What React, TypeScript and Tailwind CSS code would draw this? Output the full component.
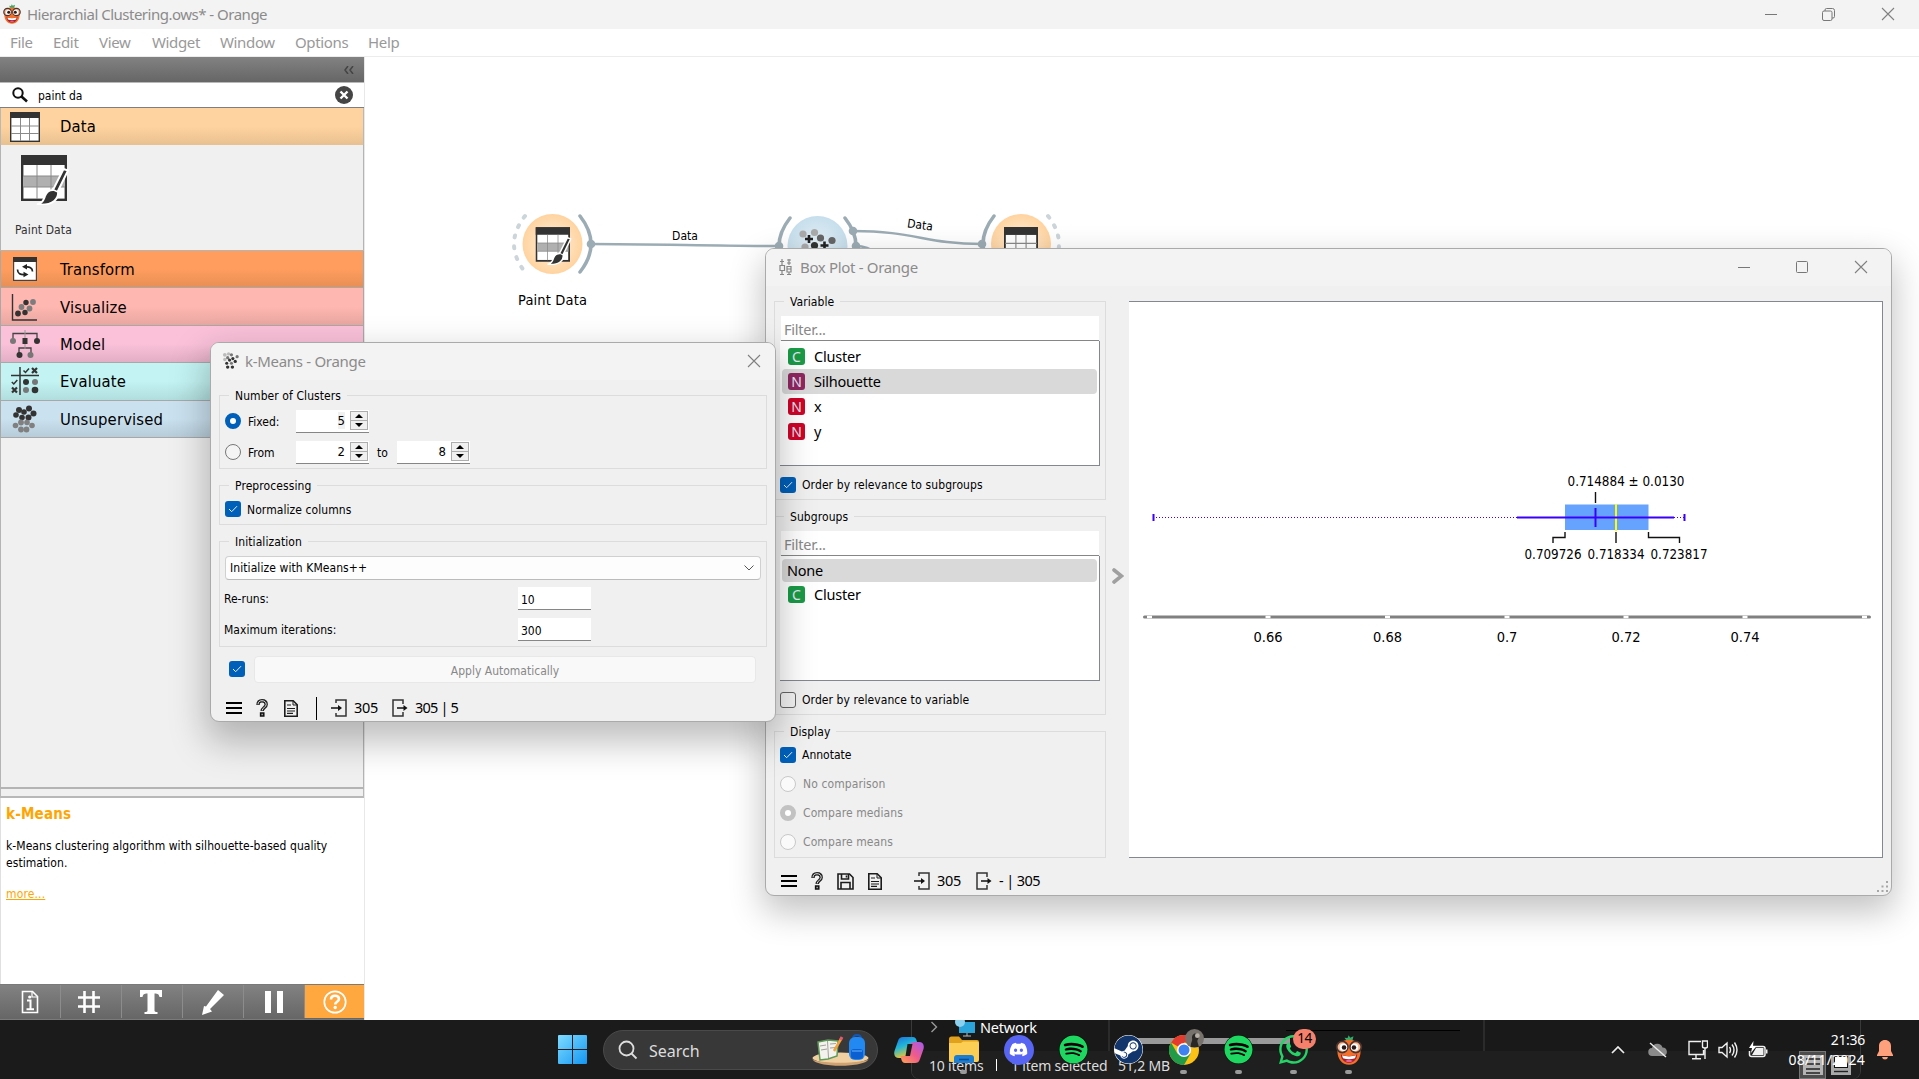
import React from "react";
import { FaDiscord, FaSpotify, FaSteam, FaWhatsapp } from "react-icons/fa";

const ui = "font-['Noto_Sans','Open_Sans',sans-serif]";
const tahoma = "font-['DejaVu_Sans_Condensed','DejaVu_Sans','Noto_Sans',sans-serif] [font-stretch:condensed]";

/* ---------- icons ---------- */

function OrangeLogo({ className = "" }: { className?: string }) {
  return (
    <svg viewBox="0 0 20 20" className={className}>
      <path d="M8.500 4 7 1.800l2 .2L9.800.2l1 1.600L13 .8l-.8 3.200z" fill="#2fae6b" />
      <path d="M10 3.200c4.800 0 7.700 2.800 7.700 7.600S14.800 19.800 10 19.800 2.300 15.600 2.300 10.800 5.200 3.200 10 3.200z" fill="#f2702a" />
      <path d="M4.500 12.800c2.500 1.600 8.500 1.600 11 0-.2 3.600-2.600 5.800-5.500 5.800s-5.300-2.200-5.500-5.800z" fill="#a3202c" />
      <path d="M5.300 13.500c2.600 1 6.800 1 9.400 0l-.7 2c-2.400.8-5.600.8-8 0z" fill="#fff" />
      <path d="M7.500 17.300q2.500-1.600 5 0-2.500 1.600-5 0z" fill="#e8629a" />
      <circle cx="5.500" cy="8" r="3.700" fill="#f8b48a" stroke="#4a3431" strokeWidth="1.200" />
      <circle cx="14.500" cy="8" r="3.700" fill="#f8b48a" stroke="#4a3431" strokeWidth="1.200" />
      <circle cx="6.300" cy="8.200" r="2.500" fill="#fff" />
      <circle cx="13.700" cy="8.200" r="2.500" fill="#fff" />
      <circle cx="6.700" cy="8.300" r="1.500" fill="#2b1a18" />
      <circle cx="13.300" cy="8.300" r="1.500" fill="#2b1a18" />
    </svg>
  );
}

function TableIcon({ className = "" }: { className?: string }) {
  return (
    <svg viewBox="0 0 30 30" className={className}>
      <rect x=".7" y=".7" width="28.600" height="28.600" fill="#fff" stroke="#333" strokeWidth="1.400" />
      <rect x="0" y="0" width="30" height="6" fill="#333" />
      <path d="M10.500 6v23M19.500 6v23M1 14h28M1 21.500h28" stroke="#8a8a8a" strokeWidth="1" />
    </svg>
  );
}

function PaintShape() {
  return (
    <>
      <rect x="1.200" y="1.200" width="43.600" height="43.600" fill="#fff" stroke="#333" strokeWidth="2.400" />
      <rect x="0" y="0" width="46" height="10" fill="#333" />
      <rect x="2.200" y="21" width="41.600" height="11" fill="#b0b0b0" />
      <path d="M16 10v34M30 10v34M2 21h42M2 32h42" stroke="#8a8a8a" strokeWidth="1" />
      <path d="M42.500 14 47 15.500 37 36c1 7-4 15-21 13.500 6-2 6.500-4.500 8-8.500 1.500-4 4.500-6 8-6z" fill="#333" stroke="#fff" strokeWidth="2" />
      <path d="M31.500 34.500l5.500 2.500" stroke="#fff" strokeWidth="1.400" />
    </>
  );
}

function KMeansIcon({ className = "" }: { className?: string }) {
  return (
    <svg viewBox="0 0 18 18" className={className}>
      <g fill="#bbb"><circle cx="3" cy="3" r="2" /><circle cx="7" cy="2" r="1.800" /><circle cx="3" cy="8" r="1.800" /></g>
      <g fill="#777"><circle cx="10" cy="3" r="1.700" /><circle cx="6" cy="6" r="1.700" /><circle cx="16" cy="5" r="1.700" /><circle cx="10" cy="12" r="1.600" /></g>
      <g fill="#333"><circle cx="8" cy="8.500" r="1.700" /><circle cx="11.500" cy="7" r="1.700" /><circle cx="5" cy="12" r="1.600" /><circle cx="14" cy="10" r="1.700" /><circle cx="6" cy="16" r="1.800" /><circle cx="11" cy="16" r="1.800" /></g>
    </svg>
  );
}

function TransformIcon() {
  return (
    <svg viewBox="0 0 24 24" className="size-6">
      <rect x=".6" y=".6" width="22.800" height="22.800" fill="#fff" stroke="#444" strokeWidth="1.200" />
      <rect width="24" height="5" fill="#333" />
      <path d="M19.500 14.500c0-3.500-3-5-7-4.500M4.500 12.500c0 4 3 5.500 7.500 5" fill="none" stroke="#222" strokeWidth="1.700" />
      <path d="M14 7v5.500L9 9.800zM10.500 14.800v5.500l5-2.700z" fill="#222" />
    </svg>
  );
}

function ScatterIcon() {
  return (
    <svg viewBox="0 0 28 28" className="size-7">
      <path d="M1.500 1v26H26" fill="none" stroke="#333" strokeWidth="1.400" />
      <g fill="#7d7d7d"><circle cx="22" cy="9" r="2.900" /><circle cx="10.500" cy="14" r="2.900" /><circle cx="18.500" cy="15.500" r="2.900" /></g>
      <g fill="#333"><circle cx="15" cy="9.500" r="2.700" /><circle cx="7" cy="20.500" r="2.900" /><circle cx="14" cy="19.500" r="2.700" /></g>
    </svg>
  );
}

function TreeIcon() {
  return (
    <svg viewBox="0 0 30 28" className="h-7 w-[30px]">
      <path d="M3 9V3.500h24V9M9 23v-5h12v5" fill="none" stroke="#444" strokeWidth="1.300" />
      <path d="M15 0v8M15 14v5" stroke="#999" strokeWidth="1" />
      <rect x="12.500" y="8" width="5" height="6" fill="#333" />
      <g fill="#777"><circle cx="3" cy="11" r="3" /><circle cx="20.500" cy="25" r="3" /></g>
      <g fill="#333"><circle cx="27" cy="11" r="3" /><circle cx="9.500" cy="25" r="3" /></g>
    </svg>
  );
}

function EvaluateIcon() {
  return (
    <svg viewBox="0 0 28 28" className="size-7">
      <path d="M9 0v28M0 8.500h28" stroke="#333" strokeWidth="1.500" />
      <path d="M12.500 3.500l2 2 3.500-4M.8 15l2 2 3.500-4" fill="none" stroke="#333" strokeWidth="1.500" />
      <path d="M21 1l5 5m0-5-5 5M1 20.500l5 5m0-5-5 5" stroke="#333" strokeWidth="2.200" />
      <g fill="#777"><circle cx="24" cy="15" r="3" /><circle cx="15" cy="23" r="3" /></g>
      <g fill="#333"><circle cx="15" cy="15" r="3" /><circle cx="24" cy="23" r="3.300" /></g>
    </svg>
  );
}

function ClusterIcon() {
  return (
    <svg viewBox="0 0 26 28" className="h-7 w-[26px]">
      <g fill="#333"><circle cx="7" cy="5" r="3" /><circle cx="17" cy="3.500" r="3" /><circle cx="12" cy="7" r="2.800" /><circle cx="4" cy="10" r="2.800" /><circle cx="21.500" cy="8.500" r="3" /><circle cx="16.500" cy="12.500" r="3" /><circle cx="10" cy="12.500" r="2.800" /></g>
      <g fill="#808080"><circle cx="9" cy="17.500" r="2.900" /><circle cx="15" cy="17.500" r="2.800" /><circle cx="3.500" cy="20.500" r="2.800" /><circle cx="20" cy="20.500" r="2.800" /><circle cx="9" cy="24.500" r="2.900" /><circle cx="14.500" cy="24.500" r="2.900" /></g>
    </svg>
  );
}

function MenuLines() {
  return <svg viewBox="0 0 16 14" className="h-3.5 w-4"><path d="M0 2h16M0 7h16M0 12h16" stroke="#000" strokeWidth="2" /></svg>;
}
function QuestionIcon() {
  return (
    <svg viewBox="0 0 12 18" className="h-[18px] w-3" fill="none">
      <path d="M2 6c0-3 1.600-4.300 4-4.300S10.200 3 10.200 5.500C10.200 8.500 6.200 8.500 6.200 12" stroke="#222" strokeWidth="3.400" />
      <path d="M2 5.400c0-2.400 1.600-3.700 4-3.700S10.200 3 10.200 5.500C10.200 8.500 6.200 8.500 6.200 11.500" stroke="#f0f0f0" strokeWidth=".9" />
      <rect x="4.600" y="14" width="3.200" height="3" fill="#999" stroke="#111" strokeWidth="1.500" />
    </svg>
  );
}
function DocIcon() {
  return (
    <svg viewBox="0 0 14 17" className="h-[17px] w-3.5" fill="none" stroke="#1c1c1c">
      <path d="M.8.8h8.400l4 4v11.400H.8z" strokeWidth="1.600" />
      <path d="M9 1v4h4" strokeWidth="1" />
      <path d="M3 5h4M3 8.500h8M3 11h8M3 13.300h6" strokeWidth="1.200" />
    </svg>
  );
}
function SaveIcon() {
  return (
    <svg viewBox="0 0 17 17" className="size-[17px]" fill="none" stroke="#1c1c1c" strokeWidth="1.600">
      <path d="M1 1h11.500L16 4.500V16H1z" />
      <path d="M4.500 1v5h7V1M4 16V9.500h9V16" />
      <path d="M9.500 2.500v2" />
    </svg>
  );
}
function InIcon() {
  return (
    <svg viewBox="0 0 16 18" className="h-[18px] w-4" fill="none" stroke="#333" strokeWidth="1.500">
      <path d="M5 4V1h10v16H5v-3" />
      <path d="M0 9h9" stroke="#111" />
      <path d="M7 6v6l4-3z" fill="#111" stroke="none" />
    </svg>
  );
}
function OutIcon() {
  return (
    <svg viewBox="0 0 16 18" className="h-[18px] w-4" fill="none" stroke="#333" strokeWidth="1.500">
      <path d="M11 5V1H1v16h10v-4" />
      <path d="M5 9h8" stroke="#111" />
      <path d="M11.500 6v6l4-3z" fill="#111" stroke="none" />
    </svg>
  );
}
function CloseX({ className = "" }: { className?: string }) {
  return <svg viewBox="0 0 14 14" className={`size-3.5 ${className}`}><path d="M1 1l12 12M13 1 1 13" stroke="#808080" strokeWidth="1.100" /></svg>;
}

/* ---------- form controls ---------- */

function Check({ on = true }: { on?: boolean }) {
  return on ? (
    <span className="flex size-4 shrink-0 items-center justify-center rounded-[3px] bg-[#005fb8]">
      <svg viewBox="0 0 10 8" className="h-2 w-2.5"><path d="M1 4l2.700 2.700L9 1.200" fill="none" stroke="#e8f1fa" strokeWidth="1" /></svg>
    </span>
  ) : (
    <span className="size-4 shrink-0 rounded-[3px] border border-[#666] bg-[#f4f4f4]" />
  );
}

function Radio({ state }: { state: "on" | "off" | "disabled" | "disabledOn" }) {
  const look = {
    on: "border-[5px] border-[#005fb8] bg-white",
    off: "border border-[#777] bg-[#f4f4f4]",
    disabled: "border border-[#c8c8c8] bg-[#fafafa]",
    disabledOn: "border-[5px] border-[#c2c2c2] bg-white",
  }[state];
  return <span className={`size-4 shrink-0 rounded-full ${look}`} />;
}

function Group({ title, className, children }: { title: string; className: string; children: React.ReactNode }) {
  return (
    <section className={`border border-[#dcdcdc] ${className}`}>
      <h3 className="-mt-[9px] ml-[9px] w-fit bg-[#f0f0f0] px-1.5 leading-[18px] tracking-[0.080px]">{title}</h3>
      {children}
    </section>
  );
}

function Spin({ value, selected = false }: { value: string; selected?: boolean }) {
  return (
    <div className="flex h-[23px] w-[73px] items-center justify-end border-b border-[#868686] bg-white pr-px">
      <span className={`mr-[5px] pt-px text-[13px] leading-4 ${selected ? "bg-[#f0f0f0]" : ""}`}>{value}</span>
      <span className="flex h-[19px] w-[18px] flex-col border border-[#adadad] bg-[#f0f0f0]">
        <span className="flex flex-1 items-center justify-center border-b border-[#adadad]">
          <svg viewBox="0 0 8 4" className="h-1 w-2"><path d="M0 4l4-4 4 4z" /></svg>
        </span>
        <span className="flex flex-1 items-center justify-center">
          <svg viewBox="0 0 8 4" className="h-1 w-2"><path d="M0 0l4 4 4-4z" /></svg>
        </span>
      </span>
    </div>
  );
}

/* ---------- sidebar ---------- */

const categories = [
  { name: "Transform", icon: <TransformIcon />, bg: "from-[#ff9d5e] via-[#ff9d5e] to-[#e88f55]" },
  { name: "Visualize", icon: <ScatterIcon />, bg: "from-[#ffb7b1] via-[#ffb7b1] to-[#e8a6a1]" },
  { name: "Model", icon: <TreeIcon />, bg: "from-[#fac1d9] via-[#fac1d9] to-[#e3afc5]" },
  { name: "Evaluate", icon: <EvaluateIcon />, bg: "from-[#c3f3f3] via-[#c3f3f3] to-[#b1dddd]" },
  { name: "Unsupervised", icon: <ClusterIcon />, bg: "from-[#cae1ef] via-[#cae1ef] to-[#b7ccd9]" },
];

function Sidebar() {
  return (
    <aside className={`flex w-[365px] shrink-0 flex-col border-r border-[#e8e8e8] ${tahoma}`}>
      <div className="flex h-[25px] items-center justify-end bg-gradient-to-b from-[#828282] to-[#666] pr-2.5">
        <svg viewBox="0 0 10 8" className="h-2 w-2.5"><path d="M4 0 1 4l3 4M9 0 6 4l3 4" fill="none" stroke="#444" strokeWidth="1.500" /></svg>
      </div>
      <div className="flex h-[26px] items-center border-t border-b border-t-[#b8b8b8] border-b-[#7e7e7e] bg-white pr-[11px] pb-px pl-3">
        <svg viewBox="0 0 16 16" className="size-4" fill="none" stroke="#111"><circle cx="6" cy="6" r="4.700" strokeWidth="2" /><path d="M9.500 9.500l5.500 5" strokeWidth="2.600" /></svg>
        <span className="ml-[10px] flex-1 pt-[3px] text-xs">paint da</span>
        <svg viewBox="0 0 18 18" className="size-[18px]"><circle cx="9" cy="9" r="9" fill="#454545" /><path d="M5.500 5.500l7 7M12.500 5.500l-7 7" stroke="#fff" strokeWidth="2.400" /></svg>
      </div>
      <div className="flex h-[37px] items-center border-x border-[#b8b8b8] bg-gradient-to-b from-[#ffd39f] via-[#ffd39f] to-[#e8c091] pl-[9px] text-[16.500px]">
        <TableIcon className="size-[30px]" />
        <span className="ml-5 pt-[2px] tracking-[0.100px]">Data</span>
      </div>
      <div className="flex h-[106px] flex-col border-x border-b border-[#b4b4b4] bg-[#f0f0f0]">
        <svg viewBox="0 0 48 50" className="mt-[10px] ml-5 h-[50px] w-12"><PaintShape /></svg>
        <span className="mt-[17px] ml-[14px] text-xs tracking-[0.100px] text-[#333]">Paint Data</span>
      </div>
      {categories.map((c) => (
        <div key={c.name} className={`flex h-[37.400px] items-center border-x border-b border-[#a8a8a8] bg-gradient-to-b text-[16.500px] tracking-[0.150px] ${c.bg}`}>
          <span className="flex w-[48px] items-center justify-center">{c.icon}</span>
          <span className="ml-[11px] pt-[3px]">{c.name}</span>
        </div>
      ))}
      <div className="flex-1 border-x border-b-2 border-[#b4b4b4] bg-[#f0f0f0]" />
      <div className="h-[9px] border-x border-b-2 border-[#b8b8b8] bg-[#f0f0f0]" />
      <div className="h-[186px] border-l border-[#e0e0e0] bg-white pt-[8px] pl-[5px] text-xs">
        <h2 className="text-[15px] leading-[17px] font-bold tracking-[0.200px] text-[#ffa500]">k-Means</h2>
        <p className="mt-[15px] w-[350px] leading-[17px] tracking-[0.060px]">k-Means clustering algorithm with silhouette-based quality<br />estimation.</p>
        <p className="mt-[14px] leading-[17px] tracking-[0.150px] text-[#ffa500] underline">more...</p>
      </div>
      <div className="flex h-9 border-y border-[#7a7a7a] bg-gradient-to-b from-[#828282] to-[#666] pb-px text-white">
        <ToolCell>
          <svg viewBox="0 0 18 24" className="h-6 w-[18px]" fill="none" stroke="#fff"><path d="M1.500 1.500h10l5 5v16h-15z" strokeWidth="1.600" /><path d="M11 1.500v5.500h5.500" strokeWidth="1.200" /><path d="M6 10.500h3.500V19M5.500 19.300h7.500" strokeWidth="2" /><circle cx="8.700" cy="7" r="1.600" fill="#fff" stroke="none" /></svg>
        </ToolCell>
        <ToolCell>
          <svg viewBox="0 0 24 24" className="mr-1 size-6"><path d="M7.500 1v22M16.500 1v22M1 7.500h22M1 16.500h22" stroke="#fff" strokeWidth="2.600" /></svg>
        </ToolCell>
        <ToolCell>
          <svg viewBox="0 0 24 26" className="mr-0.5 h-[26px] w-6" fill="#fff"><path d="M1 1h22v7h-2.500c-.5-2.500-1.500-3.500-5-3.500v17c0 1 1 1.500 3 1.500v2h-13v-2c2 0 3-.5 3-1.500v-17c-3.500 0-4.500 1-5 3.500H1z" /></svg>
        </ToolCell>
        <ToolCell>
          <svg viewBox="0 0 24 26" className="h-[26px] w-6" fill="#fff"><path d="M17 1l6 5L9 20l2 2.500L1 26l2-9 2 .5z" /></svg>
        </ToolCell>
        <ToolCell>
          <svg viewBox="0 0 18 24" className="h-6 w-[18px]" fill="#fff"><path d="M0 1h6v22H0zM12 1h6v22h-6z" /></svg>
        </ToolCell>
        <div className="flex flex-1 items-center justify-center bg-[#ffa840]">
          <svg viewBox="0 0 24 24" className="size-6" fill="none" stroke="#fff"><circle cx="12" cy="12" r="10.700" strokeWidth="1.700" /><path d="M8 9.500C8 7 9.500 5.700 12 5.700s4 1.300 4 3.300c0 2.800-3.800 2.800-3.800 5.500" strokeWidth="2.600" /><circle cx="12.200" cy="17.500" r="1.700" fill="#fff" stroke="none" /></svg>
        </div>
      </div>
    </aside>
  );
}

function ToolCell({ children }: { children: React.ReactNode }) {
  return <div className="flex w-[61px] items-center justify-center border-r border-[#8c8c8c]">{children}</div>;
}

/* ---------- workflow canvas ---------- */

function Canvas() {
  return (
    <svg viewBox="365 57 1554 963" className={`h-[963px] w-[1554px] ${tahoma}`}>
      <defs>
        <radialGradient id="orangeNode"><stop offset="0" stopColor="#fff1e0" /><stop offset="1" stopColor="#ffd39f" /></radialGradient>
        <radialGradient id="blueNode"><stop offset="0" stopColor="#e8f2f8" /><stop offset="1" stopColor="#c6deec" /></radialGradient>
      </defs>
      <g fill="none" stroke="#9cacb4" strokeWidth="3" strokeLinecap="round">
        <path d="M591 244C650 244 720 246 779 246" strokeWidth="2.400" />
        <path d="M853 231C915 231 925 244 982 244" strokeWidth="2.400" />
        <path d="M856 246c8 0 14 2 22 8" strokeWidth="2.400" />
        <path d="M580 216Q602 244 580 272M790 218Q768 246 790 274M845 218Q867 246 845 274M994 216Q972 244 994 272" strokeWidth="3.500" />
        <path d="M525 216Q503 244 525 272M1048 216Q1070 244 1048 272" stroke="#ccd5da" strokeWidth="4" strokeDasharray="2 9" />
      </g>
      <g fill="#9cacb4"><circle cx="591" cy="244" r="4.300" /><circle cx="779" cy="246" r="4.300" /><circle cx="853" cy="231" r="4.300" /><circle cx="856" cy="246" r="4.300" /><circle cx="982" cy="244" r="4.300" /></g>
      <circle cx="552.500" cy="244" r="30" fill="url(#orangeNode)" />
      <circle cx="817.500" cy="246" r="30" fill="url(#blueNode)" />
      <circle cx="1021" cy="244" r="30" fill="url(#orangeNode)" />
      <svg x="535.500" y="227" width="36" height="38" viewBox="0 0 48 50"><PaintShape /></svg>
      <svg x="1004" y="227" width="34" height="34" viewBox="0 0 30 30">
        <rect x=".8" y=".8" width="28.400" height="28.400" fill="#fff" stroke="#333" strokeWidth="1.600" />
        <rect width="30" height="7" fill="#333" />
        <path d="M10.500 7v22M19.500 7v22M1 14.500h28" stroke="#8a8a8a" strokeWidth="1" />
      </svg>
      <g fill="#aaa"><circle cx="803" cy="234" r="3.600" /><circle cx="814.500" cy="232.500" r="3.600" /><circle cx="805" cy="247" r="3.600" /></g>
      <g fill="#666"><circle cx="820.500" cy="238" r="3.600" /><circle cx="832" cy="240.500" r="3.600" /></g>
      <circle cx="814.500" cy="245.500" r="3.600" fill="#333" />
      <path d="M809 235v8M805 239h8M824.500 241.500v8M820.500 245.500h8" stroke="#222" strokeWidth="2.600" />
      <g fontSize="12" textAnchor="middle">
        <text x="685" y="240">Data</text>
        <text x="920" y="229" transform="rotate(8 920 225)">Data</text>
        <text x="552.500" y="304.500" fontSize="14.500" textLength="69">Paint Data</text>
      </g>
    </svg>
  );
}

/* ---------- k-Means window ---------- */

function KMeansWindow() {
  return (
    <div className={`absolute top-[342px] left-[210px] flex h-[380px] w-[566px] flex-col overflow-hidden rounded-[9px] border border-[#aaa] bg-[#f0f0f0] text-xs shadow-[0_16px_36px_4px_rgba(0,0,0,0.26)] ${tahoma}`}>
      <header className={`flex h-[37px] shrink-0 items-center bg-[#f3f3f3] pb-[2px] pl-[11px] ${ui}`}>
        <KMeansIcon className="size-[17px]" />
        <span className="ml-1.5 flex-1 text-[15px] tracking-[-0.300px] text-[#8b8b8b]">k-Means - Orange</span>
        <CloseX className="mr-[14px]" />
      </header>
      <div className="flex flex-col px-2 pt-[15px]">
        <Group title="Number of Clusters" className="h-[74px]">
          <div className="mt-[3px] flex h-[26px] items-center pl-[5px]">
            <Radio state="on" />
            <span className="ml-[7px] w-12 pt-px">Fixed:</span>
            <Spin value="5" selected />
          </div>
          <div className="mt-[5px] flex h-[26px] items-center pl-[5px]">
            <Radio state="off" />
            <span className="ml-[7px] w-12 pt-px">From</span>
            <Spin value="2" />
            <span className="mx-2 w-3 pt-px">to</span>
            <Spin value="8" />
          </div>
        </Group>
        <Group title="Preprocessing" className="mt-4 h-10">
          <div className="mt-1.5 flex h-4 items-center gap-[6px] pl-[5px]"><Check /><span className="pt-px tracking-[0.080px]">Normalize columns</span></div>
        </Group>
        <Group title="Initialization" className="mt-4 h-[106px]">
          <div className="mx-[5px] mt-[5px] flex h-6 items-center justify-between rounded-sm border border-[#d0d0d0] border-b-[#bbb] bg-[#fdfdfd] pr-1.5 pl-1">
            <span className="tracking-[0.080px]">Initialize with KMeans++</span>
            <svg viewBox="0 0 10 6" className="h-1.5 w-2.5"><path d="M.5.500 5 5 9.500.5" fill="none" stroke="#555" /></svg>
          </div>
          <label className="mt-[7px] flex h-[23px] items-center pl-[4px]">
            <span className="w-[294px]">Re-runs:</span>
            <span className="h-[23px] w-[73px] border-b border-[#868686] bg-white pt-[5px] pl-[3px]">10</span>
          </label>
          <label className="mt-2 flex h-[23px] items-center pl-[4px]">
            <span className="w-[294px] tracking-[0.050px]">Maximum iterations:</span>
            <span className="h-[23px] w-[73px] border-b border-[#868686] bg-white pt-[5px] pl-[3px]">300</span>
          </label>
        </Group>
        <div className="mt-[9px] flex h-[27px] items-center pl-[10px]">
          <span className="mb-px flex"><Check /></span>
          <span className="ml-[9px] flex h-[27px] w-[502px] items-center justify-center rounded border border-[#e8e8e8] bg-[#f9f9f9] pt-[3px] text-[#888]">Apply Automatically</span>
        </div>
        <footer className={`mt-[13px] flex h-6 items-center pl-[7px] text-[14.500px] tracking-[-0.300px] ${ui}`}>
          <MenuLines />
          <span className="ml-[14px]"><QuestionIcon /></span>
          <span className="ml-4"><DocIcon /></span>
          <span className="ml-[18px] h-[23px] w-px bg-black" />
          <span className="ml-[14px]"><InIcon /></span>
          <span className="ml-[7px] w-[38px]">305</span>
          <OutIcon />
          <span className="ml-[7px] tracking-[-0.800px]">305 | 5</span>
        </footer>
      </div>
    </div>
  );
}

/* ---------- Box Plot window ---------- */

function VarBadge({ kind, selected = false }: { kind: "C" | "N"; selected?: boolean }) {
  const color = kind === "C" ? "bg-[#1a9a46]" : selected ? "bg-[#8f2760]" : "bg-[#cf0428]";
  return <span className={`flex size-[17px] items-center justify-center rounded-[3px] pt-px text-[14px] leading-none tracking-normal text-[#e6e6f5] ${color}`}>{kind}</span>;
}

function Row({ kind, label, selected = false }: { kind?: "C" | "N"; label: string; selected?: boolean }) {
  return (
    <li className={`mr-[2px] ml-px flex items-center rounded-sm ${kind ? "h-[25px] gap-[9px] pl-[6px]" : "h-[23px] pl-[5px]"} ${selected ? "bg-[#d9d9d9]" : ""}`}>
      {kind && <VarBadge kind={kind} selected={selected} />}
      <span>{label}</span>
    </li>
  );
}

function FilterList({ children }: { children: React.ReactNode }) {
  return (
    <div className={`mt-[5px] ml-[5px] w-80 text-[14.500px] tracking-[-0.220px] ${ui}`}>
      <div className="mr-px ml-px h-[25px] border-b border-[#868686] bg-white pl-[3px] leading-[27px] text-[#888]">Filter...</div>
      <ul className="h-[125px] border-r border-b border-[#828790] bg-white pt-[3px] pl-px">{children}</ul>
    </div>
  );
}

const axisTicks = [
  { x: 1268, label: "0.66" },
  { x: 1387.5, label: "0.68" },
  { x: 1507, label: "0.7" },
  { x: 1626, label: "0.72" },
  { x: 1745, label: "0.74" },
];

function BoxChart() {
  return (
    <svg viewBox="1129 302 753 555" className={`h-[555px] w-[753px] ${tahoma}`}>
      <rect x="1565" y="504.500" width="83.500" height="25.500" fill="#66a3ff" />
      <path d="M1153 517.500h364M1674 517.500h11" stroke="#3a00ff" strokeWidth="1" strokeDasharray="1 2" />
      <path d="M1153.500 514v7M1684.500 514v7" stroke="#3a00ff" strokeWidth="2" />
      <path d="M1616 504v27" stroke="#ffff00" strokeWidth="2" />
      <path d="M1517 517.500h157M1595.500 508v19" stroke="#3a00ff" strokeWidth="2" />
      <path d="M1595.500 492v11M1565 532v5.500h-12v5.500M1616 532v11M1648.500 532v5.500h31v5.500" fill="none" stroke="#111" strokeWidth="1.400" />
      <g fontSize="13.500" textAnchor="middle">
        <text x="1626" y="486" textLength="117" lengthAdjust="spacingAndGlyphs">0.714884 ± 0.0130</text>
        <text x="1553" y="559" textLength="57" lengthAdjust="spacingAndGlyphs">0.709726</text>
        <text x="1616" y="559" textLength="57" lengthAdjust="spacingAndGlyphs">0.718334</text>
        <text x="1679" y="559" textLength="57" lengthAdjust="spacingAndGlyphs">0.723817</text>
      </g>
      <path d="M1144.500 617H1869.500" stroke="#808080" strokeWidth="3" strokeLinecap="round" />
      <path d="M1147 617h5M1862 617h5" stroke="#fff" strokeWidth="2.500" />
      {axisTicks.map((t) => (
        <g key={t.label}>
          <path d={`M${t.x - 2.5} 617h5`} stroke="#fff" strokeWidth="2.500" />
          <text x={t.x} y="642" fontSize="14.500" textAnchor="middle">{t.label}</text>
        </g>
      ))}
    </svg>
  );
}

function BoxPlotWindow() {
  return (
    <div className={`absolute top-[248px] left-[765px] flex h-[648px] w-[1127px] flex-col overflow-hidden rounded-[9px] border border-[#aaa] bg-[#f0f0f0] text-xs shadow-[0_14px_34px_2px_rgba(0,0,0,0.24)] ${tahoma}`}>
      <header className={`flex h-[37px] shrink-0 items-center bg-[#f3f3f3] pb-px pl-[13px] ${ui}`}>
        <svg viewBox="0 0 13 18" className="h-[18px] w-[13px]" fill="none" stroke="#858585" strokeWidth="1.200">
          <path d="M3 1v6M1 3.500h4M1 7.500h4.500v5H1zM3 12.500V17M1 16.500h4M10 1v6M8 2h4M8 5h4M8 8.500h4v5.500H8zM8 11h4M10 14v3M8 16.500h4" />
        </svg>
        <span className="ml-2 flex-1 text-[15px] tracking-[-0.330px] text-[#8b8b8b]">Box Plot - Orange</span>
        <span className="mr-[46px] h-px w-3 bg-[#777]" />
        <span className="mr-[46px] size-3 rounded-[1.500px] border border-[#777]" />
        <CloseX className="mr-[23px]" />
      </header>
      <div className="flex pt-[15px] pl-2">
        <div className="flex w-[332px] flex-col gap-4">
          <Group title="Variable" className="h-[199px]">
            <FilterList>
              <Row kind="C" label="Cluster" />
              <Row kind="N" label="Silhouette" selected />
              <Row kind="N" label="x" />
              <Row kind="N" label="y" />
            </FilterList>
            <div className="mt-[10px] flex h-[17px] items-center gap-[6px] pl-[5px]"><Check /><span className="pt-px tracking-[0.100px]">Order by relevance to subgroups</span></div>
          </Group>
          <Group title="Subgroups" className="h-[199px]">
            <FilterList>
              <Row label="None" selected />
              <Row kind="C" label="Cluster" />
            </FilterList>
            <div className="mt-[10px] flex h-[17px] items-center gap-[6px] pl-[5px]"><Check on={false} /><span className="pt-px tracking-[0.080px]">Order by relevance to variable</span></div>
          </Group>
          <Group title="Display" className="h-[127px]">
            <div className="-mt-px flex h-[29px] items-center gap-[6px] pl-[5px]"><Check /><span className="pt-px">Annotate</span></div>
            <div className="flex h-[29px] items-center gap-[7px] pl-[5px] text-[#888]"><Radio state="disabled" /><span className="pt-px tracking-[0.100px]">No comparison</span></div>
            <div className="flex h-[29px] items-center gap-[7px] pl-[5px] text-[#888]"><Radio state="disabledOn" /><span className="pt-px tracking-[0.100px]">Compare medians</span></div>
            <div className="flex h-[29px] items-center gap-[7px] pl-[5px] text-[#888]"><Radio state="disabled" /><span className="pt-px tracking-[0.100px]">Compare means</span></div>
          </Group>
        </div>
        <div className="flex w-[23px] items-center justify-center pb-2">
          <svg viewBox="0 0 12 16" className="h-4 w-3"><path d="M2 2l7.500 6L2 14" fill="none" stroke="#a0a0a0" strokeWidth="3.600" strokeLinecap="round" /></svg>
        </div>
        <div className="h-[557px] w-[754px] border-y border-r border-[#828790] bg-white"><BoxChart /></div>
      </div>
      <footer className={`flex flex-1 items-center pt-[9px] pl-[15px] text-[14.500px] tracking-[-0.300px] ${ui}`}>
        <MenuLines />
        <span className="ml-[14px]"><QuestionIcon /></span>
        <span className="ml-[14px]"><SaveIcon /></span>
        <span className="ml-[14px]"><DocIcon /></span>
        <span className="ml-8"><InIcon /></span>
        <span className="ml-[7px] w-[39px]">305</span>
        <OutIcon />
        <span className="ml-[7px] flex-1 tracking-[-0.600px]">- | 305</span>
        <svg viewBox="0 0 12 12" className="mt-3 mr-0.5 size-3" fill="#a6a6a6"><path d="M9 0h2v2H9zM9 4.500h2v2H9zM9 9h2v2H9zM4.500 4.500h2v2h-2zM4.500 9h2v2h-2zM0 9h2v2H0z" /></svg>
      </footer>
    </div>
  );
}

/* ---------- taskbar ---------- */

function ExplorerBehind() {
  return (
    <div className="absolute top-0 left-[911px] flex h-[59px] w-[950px] flex-col rounded-b-lg border-x border-b border-[#3a3a3a] bg-[#191919] text-[#ddd]">
      <div className="flex h-[31px]">
        <div className="flex h-[31px] w-[198px] items-start border-r-2 border-[#2b2b2b] pl-[18px]">
          <svg viewBox="0 0 8 12" className="mt-px h-3 w-2"><path d="M1.500 1 6.500 6l-5 5" fill="none" stroke="#999" strokeWidth="1.400" /></svg>
          <svg viewBox="0 0 20 17" className="ml-[17px] h-[17px] w-5"><rect x="4" y="2" width="16" height="11" fill="#2ba4dc" /><circle cx="5" cy="2" r="5" fill="#8bd0ee" /><path d="M12 13v3M8 16h8" stroke="#bbb" /></svg>
          <span className="ml-[5px] text-[14.500px] leading-[15px] tracking-[-0.220px] text-white">Network</span>
        </div>
        <div className="w-[375px] border-r-2 border-[#2b2b2b] pt-[10px]">
          <div className="ml-[176px] h-px w-[174px] bg-black" />
          <div className="mt-[7px] ml-[26px] h-[6px] w-[154px] bg-[#9a9a9a]" />
        </div>
      </div>
      <div className="flex flex-1 items-center rounded-b-lg bg-[#1f1f1f] pl-[17px] text-[14px] tracking-[-0.200px]">
        <span className="w-[67px]">10 items</span>
        <span className="mr-[14px] h-3 w-px bg-white" />
        <span className="w-[107px] whitespace-nowrap">1 item selected</span>
        <span className="flex-1">51,2 MB</span>
        <span className="flex h-7 w-[27px] items-center justify-center border border-[#777] bg-[#4d4d4d]">
          <svg viewBox="0 0 20 20" className="size-5"><rect width="20" height="20" fill="#b4b4b4" /><path d="M3 4h14M3 9h14M3 14h14M3 18h14" stroke="#222" strokeWidth="1.400" /></svg>
        </span>
        <svg viewBox="0 0 20 20" className="mr-[9px] ml-[5px] size-5"><rect width="20" height="20" fill="#a8a8a8" /><rect x="3.500" y="1.500" width="13" height="11" fill="#fff" stroke="#111" /><path d="M3 16.500h14" stroke="#222" strokeWidth="1.400" /></svg>
      </div>
    </div>
  );
}

function AppSlot({ children, dot = true }: { children?: React.ReactNode; dot?: boolean }) {
  return (
    <div className="relative flex h-[59px] w-[55px] items-center justify-center">
      {children}
      {dot && <span className="absolute bottom-[5px] left-6 h-1 w-[7px] rounded-full bg-[#9a9a9a]" />}
    </div>
  );
}

function SteamLogo() {
  return (
    <span className="flex size-[29px] items-center justify-center overflow-hidden rounded-full bg-white">
      <FaSteam className="size-[29px] text-[#12356b]" />
    </span>
  );
}

function Taskbar() {
  return (
    <div className={`relative h-[59px] bg-[#1b1b1b] ${ui}`}>
      <ExplorerBehind />
      <div className="relative flex h-[59px] items-center pl-[558px] text-white">
        <svg viewBox="0 0 29 29" className="size-[29px]">
          <defs><linearGradient id="win" x1="0" y1="0" x2="1" y2="1"><stop offset="0" stopColor="#7fdcff" /><stop offset="1" stopColor="#1396f2" /></linearGradient></defs>
          <path d="M0 1q0-1 1-1h13v14H0zM15 0h13q1 0 1 1v13H15zM0 15h14v14H1q-1 0-1-1zM15 15h14v13q0 1-1 1H15z" fill="url(#win)" />
        </svg>
        <div className="ml-4 flex h-10 w-[275px] items-center rounded-full border border-[#4a4a4a] bg-[#383838] pr-2 pl-[14px]">
          <svg viewBox="0 0 20 20" className="size-5" fill="none" stroke="#ddd" strokeWidth="1.800"><circle cx="8.500" cy="8.500" r="7" /><path d="M13.500 13.500l5 5" /></svg>
          <span className="ml-[11px] flex-1 pt-[2px] text-[16px] text-[#ddd]">Search</span>
          <svg viewBox="0 0 57 32" className="h-8 w-[57px]">
            <ellipse cx="28.500" cy="24" rx="28" ry="5.500" fill="#f0cfa0" />
            <path d="M.5 25c5 5 51 5 56 0-2 9-54 9-56 0z" fill="#cfa272" />
            <path d="M6 8l10-2 10 1-1 15-9 3-8 1z" fill="#f4f2ec" stroke="#5e9a57" strokeWidth="1.500" />
            <path d="M15.500 7l1 17M8 12l6-1M9 16l6-1M18 10l6-.5M18 14l6-.5" stroke="#8a8a8a" strokeWidth=".8" />
            <path d="M29 5 22 17" stroke="#f0a13c" strokeWidth="2.500" /><path d="M30 3l-1.500 3" stroke="#e65a6a" strokeWidth="3" />
            <path d="M41 5q0-4 4-4t4 4" fill="none" stroke="#1556b0" strokeWidth="2" />
            <rect x="37" y="3" width="16" height="23" rx="6" fill="#2288f2" />
            <rect x="39" y="15" width="12" height="10" rx="3" fill="#0c5fd0" />
            <path d="M40 17h10" stroke="#63b6ff" />
          </svg>
        </div>
        <div className="ml-[3px] flex">
          <AppSlot dot={false}>
            <svg viewBox="0 0 30 28" className="h-7 w-[30px]">
              <defs>
                <linearGradient id="cpa" x1="0" y1="0" x2=".4" y2="1"><stop offset="0" stopColor="#1b6fe0" /><stop offset=".5" stopColor="#20b7d8" /><stop offset="1" stopColor="#f4c62b" /></linearGradient>
                <linearGradient id="cpb" x1="1" y1="0" x2="0" y2="1"><stop offset="0" stopColor="#a25bf0" /><stop offset=".5" stopColor="#ef5a8c" /><stop offset="1" stopColor="#ffa34d" /></linearGradient>
              </defs>
              <path d="M9 1h10c2 0 3 1.500 3.600 3.500L23.500 8H20c-2 0-3 1-3.500 3l-2.500 8c-.7 2-1.500 3-4 3H5c-4 0-5.500-3-4.500-7L4 5c1-3 2.500-4 5-4z" fill="url(#cpa)" />
              <path d="M21 27H11c-2 0-3-1.500-3.600-3.500L6.500 20H10c2 0 3-1 3.500-3L16 9c.7-2 1.500-3 4-3h5c4 0 5.500 3 4.500 7L26 23c-1 3-2.500 4-5 4z" fill="url(#cpb)" />
              <path d="M13.500 8h5l-2.500 12h-4.500z" fill="#1b1b1b" />
            </svg>
          </AppSlot>
          <AppSlot>
            <svg viewBox="0 0 30 27" className="h-[27px] w-[30px]"><path d="M0 3q0-2.500 2.500-2.500H10L13 4h15q2 0 2 2v4H0z" fill="#e0a11c" /><path d="M0 7h12l2-1.500h14q2 0 2 2V24q0 2-2 2H2q-2 0-2-2z" fill="#fccf54" /><path d="M5 27v-5q0-3 3-3h14q3 0 3 3v5z" fill="#1c7ed2" /><path d="M10 23.500h10" stroke="#0b4d93" strokeWidth="1.600" /></svg>
          </AppSlot>
          <AppSlot dot={false}><span className="flex size-[30px] items-center justify-center rounded-full bg-[#5865f2]"><FaDiscord className="size-[19px] text-white" /></span></AppSlot>
          <AppSlot dot={false}><span className="rounded-full bg-black"><FaSpotify className="size-[29px] text-[#1ed760]" /></span></AppSlot>
          <AppSlot dot={false}><SteamLogo /></AppSlot>
          <AppSlot>
            <svg viewBox="0 0 30 30" className="size-[30px]">
              <circle cx="15" cy="15" r="15" fill="#fbc116" />
              <path d="M15 15 2 7.500A15 15 0 0 1 28 7.500H15z" fill="#e33b2e" />
              <path d="M15 15 8.500 18.800 2 7.500A15 15 0 0 0 15 30l6.500-11.200z" fill="#229b48" />
              <circle cx="15" cy="15" r="7" fill="#fff" /><circle cx="15" cy="15" r="5.500" fill="#3e82f1" />
            </svg>
            <svg viewBox="0 0 20 20" className="absolute top-[9px] left-[29px] size-[19px]"><circle cx="10" cy="10" r="10" fill="#77726b" /><path d="M6 19c0-5 2-6 1.500-9S9 4 12 5s3 4 1.500 6 1 5 1 8z" fill="#2a2724" /><circle cx="13" cy="7" r="2.500" fill="#b7b0a8" /></svg>
          </AppSlot>
          <AppSlot><span className="rounded-full bg-black"><FaSpotify className="size-[29px] text-[#1ed760]" /></span></AppSlot>
          <AppSlot>
            <FaWhatsapp className="size-[33px] text-[#25d366]" />
            <span className="absolute top-[9px] left-[27px] flex h-5 w-[23px] items-center justify-center rounded-full bg-[#f5806c] text-[13.500px] leading-none tracking-[-0.500px] text-black">14</span>
          </AppSlot>
          <AppSlot><OrangeLogo className="h-[30px] w-[30px]" /></AppSlot>
        </div>
        <div className="ml-auto flex items-center pr-[26px]">
          <svg viewBox="0 0 14 8" className="h-2 w-3.5"><path d="M1 7l6-6 6 6" fill="none" stroke="#eee" strokeWidth="1.700" /></svg>
          <svg viewBox="0 0 20 16" className="ml-[23px] h-4 w-5"><path d="M4.500 14a4 4 0 0 1-.5-8 5.500 5.500 0 0 1 10.500-.5A4.300 4.300 0 0 1 15.500 14z" fill="#8a8a8a" /><path d="M2 1l16 14" stroke="#eee" strokeWidth="1.400" /></svg>
          <svg viewBox="0 0 20 20" className="ml-5 size-5" fill="none" stroke="#f0f0f0" strokeWidth="1.400"><path d="M13 1.500H1v13h14.500V10M8 15v3.500M4 18.700h9M17 8v11" /><path d="M14.500 1h5v5.500q0 1.500-2.500 1.500t-2.500-1.500z" /></svg>
          <svg viewBox="0 0 20 18" className="ml-[10px] h-[18px] w-5" fill="none" stroke="#f0f0f0" strokeWidth="1.400"><path d="M1 6.500h3L9 2v14l-5-4.500H1zM11.500 6q2 3 0 6M14 3.500q4 5.500 0 11M16.500 1.500q5 7.500 0 15" /></svg>
          <svg viewBox="0 0 20 18" className="ml-[10px] h-[18px] w-5"><path d="M4 5.500h11q2 0 2 2v6q0 2-2 2H3.500q-2 0-2-2V10" fill="none" stroke="#f0f0f0" strokeWidth="1.500" /><path d="M8 7h7.500v7H4zM18 8.500h1.500v4H18z" fill="#f0f0f0" /><path d="M5.500 0 1 7h3l-1 5 5.500-7H5z" fill="#fff" /></svg>
          <div className="flex w-[97px] flex-col items-end text-[14px] leading-[20px]"><span className="tracking-[-0.300px]">21:36</span><span className="tracking-[0.200px]">08/11/2024</span></div>
          <svg viewBox="0 0 16 20" className="ml-3 h-5 w-4" fill="#ffa07c"><path d="M8 0c3.500 0 6 2.500 6 6v5l2 4v1H0v-1l2-4V6c0-3.500 2.500-6 6-6zM5 17h6q-.5 2.500-3 2.500T5 17z" /></svg>
        </div>
      </div>
    </div>
  );
}

/* ---------- page ---------- */

export default function App() {
  return (
    <div className="relative flex h-[1079px] w-[1919px] flex-col overflow-hidden bg-white text-black">
      <header className={`flex h-[29px] shrink-0 items-center bg-[#f3f3f3] pb-px pl-0.5 ${ui}`}>
        <OrangeLogo className="size-5" />
        <span className="ml-[5px] flex-1 text-[15px] tracking-[-0.500px] text-[#8b8b8b]">Hierarchial Clustering.ows* - Orange</span>
        <span className="mr-[45px] h-px w-3 bg-[#777]" />
        <svg viewBox="0 0 13 13" className="mr-[46px] size-[13px]" fill="none" stroke="#777"><rect x=".5" y="3" width="9.500" height="9.500" rx="1.500" /><path d="M3 3V2Q3 .5 4.500.5h6q2 0 2 2v6q0 1.500-1.500 1.500h-1" /></svg>
        <CloseX className="mr-[24px]" />
      </header>
      <nav className={`flex h-7 shrink-0 items-center border-b border-[#ececec] pl-[10px] text-[15px] tracking-[-0.350px] text-[#999] ${ui}`}>
        <span className="w-[43px]">File</span>
        <span className="w-[46px]">Edit</span>
        <span className="w-[53px]">View</span>
        <span className="w-[68px]">Widget</span>
        <span className="w-[75px]">Window</span>
        <span className="w-[73px]">Options</span>
        <span>Help</span>
      </nav>
      <main className="flex h-[963px] shrink-0">
        <Sidebar />
        <Canvas />
      </main>
      <BoxPlotWindow />
      <KMeansWindow />
      <Taskbar />
    </div>
  );
}
